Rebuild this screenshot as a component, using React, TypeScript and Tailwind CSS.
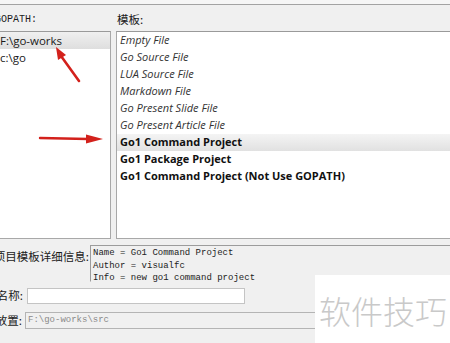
import React from "react";

const files = ["Empty File", "Go Source File", "LUA Source File", "Markdown File", "Go Present Slide File", "Go Present Article File"];
const projects = ["Go1 Command Project", "Go1 Package Project", "Go1 Command Project (Not Use GOPATH)"];

export default function App() {
  return (
    <div className="relative w-[450px] h-[343px] overflow-hidden bg-[#f0f0f0] text-[#1a1a1a]" style={{ fontFamily: '"Open Sans", "Noto Sans CJK SC", sans-serif' }}>
      <div className="h-[5px] bg-[#f6f6f6] border-b border-[#a3a3a3]" />
      {/* labels */}
      <div className="h-[26px] flex items-center pt-[4px]">
        <div className="w-[117px] -ml-[5px] text-[10px] leading-none" style={{ fontFamily: '"Liberation Mono", monospace' }}>GOPATH:</div>
        <div className="ml-[5px] text-[11.5px] leading-none" style={{ fontFamily: '"Noto Sans CJK SC", sans-serif' }}>模板:</div>
      </div>
      {/* lists */}
      <div className="h-[208px] flex gap-[5px]">
        <div className="-ml-[4px] w-[115px] h-full bg-white border border-[#a8a8a8] border-t-[#9a9a9a]">
          <div className="h-[17px] flex items-center pl-[3px] text-[11.5px] bg-gradient-to-b from-[#f0f0f0] to-[#dedede]">F:\go-works</div>
          <div className="h-[17px] flex items-center pl-[3px] text-[11.5px]">c:\go</div>
        </div>
        <div className="flex-1 -mr-[4px] h-full bg-white border border-[#a8a8a8] border-t-[#9a9a9a]">
          {files.map((f) => (
            <div key={f} className="h-[17px] flex items-center pl-[3px] text-[11px] italic text-[#333]">{f}</div>
          ))}
          {projects.map((p, i) => (
            <div key={p + i} className={"h-[17px] flex items-center pl-[3px] text-[11px] font-bold text-[#111] " + (i === 0 ? "bg-gradient-to-b from-[#f4f4f4] to-[#e1e1e1]" : "")}>{p}</div>
          ))}
        </div>
      </div>
      {/* details */}
      <div className="mt-[6px] flex">
        <div className="w-[90px] shrink-0 pt-[4px] pr-[1px] text-[11.5px] leading-[14px] flex justify-end" style={{ fontFamily: '"Noto Sans CJK SC", sans-serif' }}>
          <span className="whitespace-nowrap">项目模板详细信息:</span>
        </div>
        <div className="flex-1 -mr-[4px] h-[37px] border border-[#9c9c9c] border-b-transparent pl-[2px] pt-[1px] text-[9px] leading-[12.5px] text-[#222]" style={{ fontFamily: '"Liberation Mono", monospace' }}>
          <div>Name = Go1 Command Project</div>
          <div>Author = visualfc</div>
          <div>Info = new go1 command project</div>
        </div>
      </div>
      <div className="mt-[6px] flex h-[16px] items-center">
        <div className="w-[27px] shrink-0 flex justify-end pr-[4px] text-[11.5px]" style={{ fontFamily: '"Noto Sans CJK SC", sans-serif' }}>
          <span className="whitespace-nowrap">项目名称:</span>
        </div>
        <div className="w-[218px] h-[16px] bg-white border border-[#c4c4c4]" />
      </div>
      <div className="mt-[8px] flex h-[17px] items-center">
        <div className="w-[25px] shrink-0 flex justify-end pr-[3px] text-[11.5px]" style={{ fontFamily: '"Noto Sans CJK SC", sans-serif' }}>
          <span className="whitespace-nowrap">存放置:</span>
        </div>
        <div className="flex-1 -mr-[4px] h-[17px] bg-[#f0f0f0] border border-[#b4b4b4] flex items-center pl-[2px] text-[9px] text-[#8a8a8a]" style={{ fontFamily: '"Liberation Mono", monospace' }}>F:\go-works\src</div>
      </div>

      {/* arrows */}
      <svg className="absolute left-0 top-0 pointer-events-none" width="450" height="343">
        <line x1="79" y1="81" x2="61" y2="56" stroke="#d3211c" strokeWidth="2.6" strokeLinecap="round" />
        <polygon points="56,47 66,55 58,60" fill="#d3211c" />
        <line x1="40" y1="138" x2="88" y2="139" stroke="#d3211c" strokeWidth="2.4" strokeLinecap="round" />
        <polygon points="103,139 86,134.5 86,143.5" fill="#d3211c" />
      </svg>

      {/* watermark */}
      <div className="absolute left-[315px] top-[275px] w-[140px] h-[70px] bg-white flex items-center pl-[4px]">
        <span className="text-[32px] leading-none text-[#c9c9c9]" style={{ fontFamily: '"Noto Sans CJK SC", sans-serif', fontWeight: 300 }}>软件技巧</span>
      </div>
    </div>
  );
}
